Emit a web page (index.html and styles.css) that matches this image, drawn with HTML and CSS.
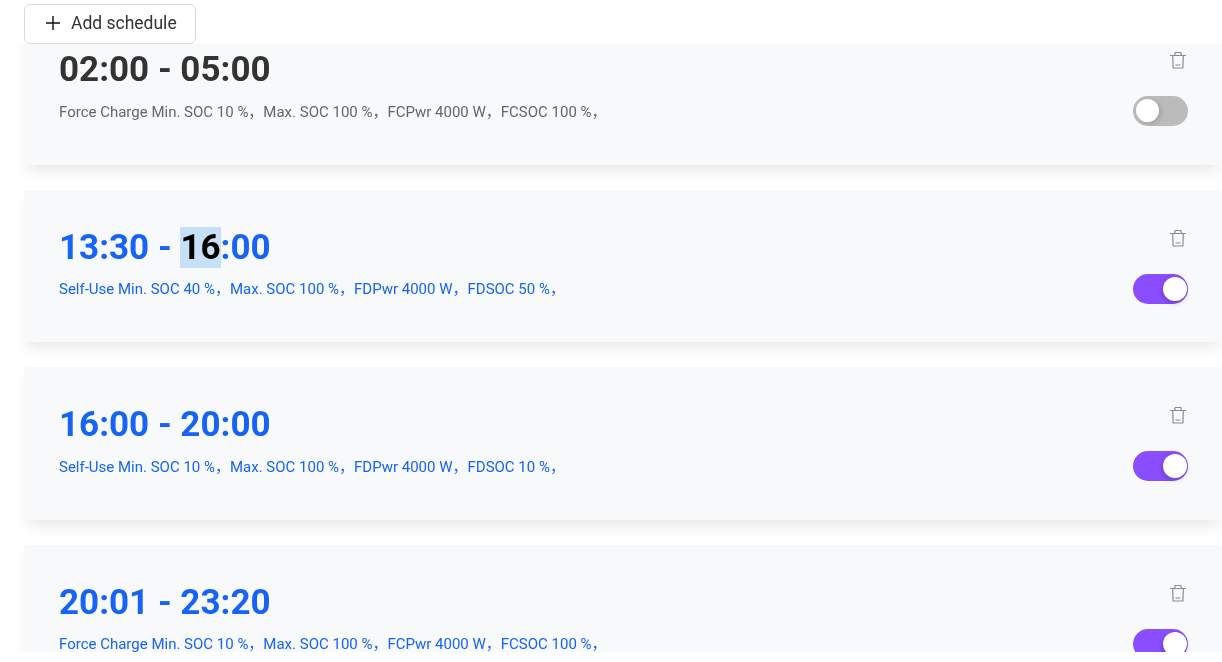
FILE: index.html
```html
<!DOCTYPE html>
<html lang="en">
<head>
<meta charset="utf-8">
<title>Schedules</title>
<link rel="stylesheet" href="styles.css">
</head>
<body>
<svg class="defs" width="0" height="0" aria-hidden="true">
  <symbol id="trash" viewBox="0 0 18 18">
    <path d="M1 4.5H17M5.5 4.5L6.2 1.5H11.8L12.5 4.5M3.7 4.5L4.1 17H13.9L14.3 4.5M6.5 14H11.5" fill="none" stroke="currentColor" stroke-width="1.2"/>
  </symbol>
</svg>
<main class="page">
  <div class="toolbar">
    <button class="add-btn" type="button">
      <svg class="plus" viewBox="0 0 16 16" aria-hidden="true"><path d="M8 1V15M1 8H15" fill="none" stroke="currentColor" stroke-width="1.4"/></svg>
      <span>Add schedule</span>
    </button>
  </div>
  <div class="list">
    <article class="card card-first">
      <div class="info">
        <div class="time">02:00 - 05:00</div>
        <div class="desc">Force Charge Min. SOC 10 %，Max. SOC 100 %，FCPwr 4000 W，FCSOC 100 %，</div>
      </div>
      <div class="actions">
        <svg class="trash"><use href="#trash"/></svg>
        <span class="switch"><span class="knob"></span></span>
      </div>
    </article>
    <article class="card active">
      <div class="info">
        <div class="time">13:30 - <span class="selected">16</span>:00</div>
        <div class="desc">Self-Use Min. SOC 40 %，Max. SOC 100 %，FDPwr 4000 W，FDSOC 50 %，</div>
      </div>
      <div class="actions">
        <svg class="trash"><use href="#trash"/></svg>
        <span class="switch on"><span class="knob"></span></span>
      </div>
    </article>
    <article class="card active">
      <div class="info">
        <div class="time">16:00 - 20:00</div>
        <div class="desc">Self-Use Min. SOC 10 %，Max. SOC 100 %，FDPwr 4000 W，FDSOC 10 %，</div>
      </div>
      <div class="actions">
        <svg class="trash"><use href="#trash"/></svg>
        <span class="switch on"><span class="knob"></span></span>
      </div>
    </article>
    <article class="card active">
      <div class="info">
        <div class="time">20:01 - 23:20</div>
        <div class="desc">Force Charge Min. SOC 10 %，Max. SOC 100 %，FCPwr 4000 W，FCSOC 100 %，</div>
      </div>
      <div class="actions">
        <svg class="trash"><use href="#trash"/></svg>
        <span class="switch on"><span class="knob"></span></span>
      </div>
    </article>
  </div>
</main>
</body>
</html>
```
FILE: styles.css
```css
* { box-sizing: border-box; }
html, body { margin: 0; height: 100%; background: #fff; overflow: hidden; }
body { font-family: Roboto, "Noto Sans CJK SC", sans-serif; }
.defs { display: block; height: 0; }
.page { height: 652px; display: flex; flex-direction: column; overflow: hidden; will-change: transform; }
.toolbar { flex: none; height: 44px; padding: 4px 0 0 24px; }
.add-btn {
  display: flex; align-items: center; gap: 10px;
  width: 172px; height: 40px; padding: 0 0 2px 20px;
  background: #fff; border: 1px solid #d9d9d9; border-radius: 6px;
  font: 400 17.5px Roboto, sans-serif; color: #333;
}
.plus { width: 16px; height: 16px; color: #111; }
.list { flex: 1; min-height: 0; overflow: hidden; padding-left: 24px; display: flex; flex-direction: column; gap: 25px; }
.card {
  flex: none; height: 152.5px; padding: 37px 34px 0 35px;
  display: flex; justify-content: space-between;
  background: #f8f9fb; border-radius: 4px;
  box-shadow: 0 9px 14px -4px rgba(0, 0, 0, .1);
  color: #333;
}
.card-first { margin-top: -31.75px; }
.card-first .desc { color: #666; }
.active, .active .desc { color: #1763f5; }
.time { font-size: 35px; font-weight: 700; line-height: 41px; }
.selected { background: #c7dff7; color: #000; }
.desc { margin-top: 11.4px; font-size: 15px; line-height: 20px; }
.actions { display: flex; flex-direction: column; align-items: flex-end; }
.trash { width: 18px; height: 18px; color: #8c8c8c; margin: 2px 1px 0 0; }
.switch {
  display: block; position: relative; width: 55px; height: 30px; margin-top: 27px;
  border-radius: 15px; background: #bbb;
}
.switch.on { background: #8a4dff; }
.knob {
  position: absolute; top: 3px; left: 3px; width: 24px; height: 24px;
  border-radius: 50%; background: #fff; box-shadow: -1px 2px 5px rgba(0, 0, 0, .2);
}
.switch:not(.on) .knob { width: 23px; height: 23px; box-shadow: 2px 1px 5px rgba(0, 0, 0, .15); }
.on .knob { left: 30px; }
```
